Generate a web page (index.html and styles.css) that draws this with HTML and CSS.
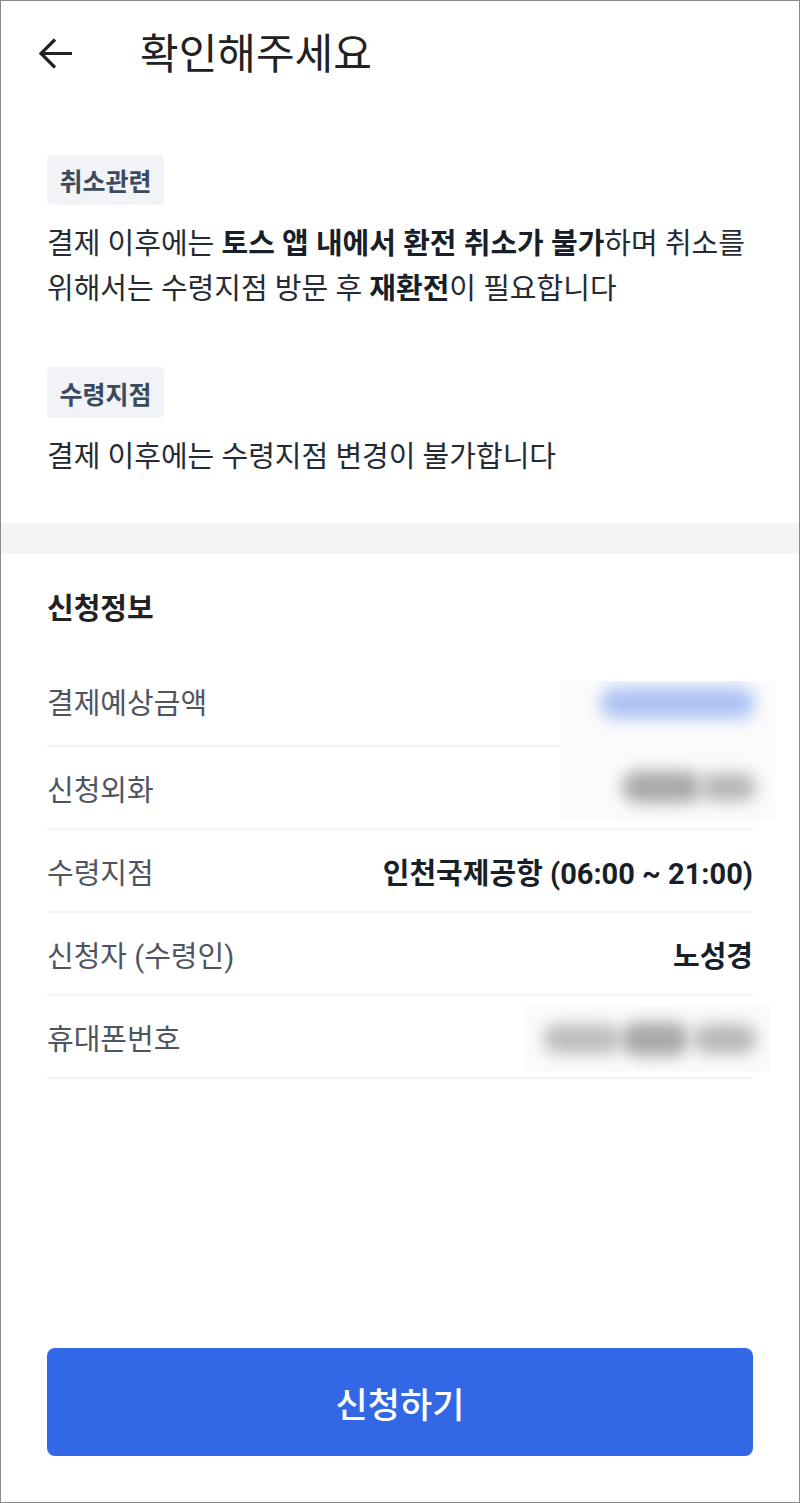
FILE: index.html
```html
<!DOCTYPE html>
<html lang="ko">
<head>
<meta charset="utf-8">
<title>확인해주세요</title>
<link rel="stylesheet" href="styles.css">
</head>
<body>
<div class="frame">
  <header class="topbar">
    <svg class="back" width="34" height="34" viewBox="0 0 34 34" aria-hidden="true">
      <path d="M2 15.5H33M16 1.5L2 15.5L16 29.5" fill="none" stroke="#222" stroke-width="3.2"/>
    </svg>
    <h1 class="title">확인해주세요</h1>
  </header>

  <section class="notice">
    <span class="tag">취소관련</span>
    <p class="notice-text">결제 이후에는 <b>토스 앱 내에서 환전 취소가 불가</b>하며 취소를<br>위해서는 수령지점 방문 후 <b>재환전</b>이 필요합니다</p>
    <span class="tag tag-second">수령지점</span>
    <p class="notice-text">결제 이후에는 수령지점 변경이 불가합니다</p>
  </section>

  <div class="band"></div>

  <section class="info">
    <h2 class="info-title">신청정보</h2>
    <div class="rows">
      <div class="row row-first">
        <span class="label">결제예상금액</span>
        <span class="value"></span>
        <div class="redact redact-a">
          <span class="blob blob-blue"></span>
          <span class="blob blob-gray1"></span>
          <span class="blob blob-gray2"></span>
        </div>
      </div>
      <div class="row">
        <span class="label">신청외화</span>
        <span class="value"></span>
      </div>
      <div class="row">
        <span class="label">수령지점</span>
        <span class="value">인천국제공항 (06:00 ~ 21:00)</span>
      </div>
      <div class="row">
        <span class="label">신청자 (수령인)</span>
        <span class="value">노성경</span>
      </div>
      <div class="row">
        <span class="label">휴대폰번호</span>
        <span class="value"></span>
        <div class="redact redact-b">
          <span class="blob blob-p1"></span>
          <span class="blob blob-p2"></span>
          <span class="blob blob-p3"></span>
        </div>
      </div>
    </div>
  </section>

  <div class="footer">
    <button class="cta" type="button">신청하기</button>
  </div>
</div>
</body>
</html>
```

FILE: styles.css
```css
* { box-sizing: border-box; }

html, body {
  margin: 0;
  padding: 0;
  background: #ffffff;
}

body {
  font-family: Roboto, "Noto Sans CJK KR", "Noto Sans", sans-serif;
  color: #191f28;
}

.frame {
  width: 800px;
  height: 1503px;
  border: 1px solid #8a8a8a;
  display: flex;
  flex-direction: column;
  background: #fff;
  overflow: hidden;
}

.topbar {
  height: 108px;
  display: flex;
  align-items: center;
  padding-left: 38px;
}

.back {
  display: block;
  flex: none;
}

.title {
  margin: 0 0 0 67px;
  font-size: 42px;
  font-weight: 400;
  color: #222222;
  line-height: 1;
}

.notice {
  padding: 46px 46px 0;
  display: flex;
  flex-direction: column;
  align-items: flex-start;
}

.tag {
  display: inline-flex;
  align-items: center;
  height: 50px;
  padding: 0 12.5px;
  border-radius: 5px;
  background: #f1f3f6;
  color: #3c4a5e;
  font-size: 25px;
  font-weight: 700;
}

.tag-second {
  margin-top: 55px;
  height: 51px;
}

.notice-text {
  margin: 17px 0 0;
  font-size: 29px;
  line-height: 45px;
  color: #262b33;
  white-space: nowrap;
}

.notice-text b {
  font-weight: 700;
  color: #191f28;
}

.band {
  margin-top: 43px;
  height: 31px;
  background: #f2f3f5;
  flex: none;
}

.info {
  padding: 37px 46px 0;
}

.info-title {
  margin: 0;
  font-size: 29px;
  line-height: 36px;
  font-weight: 700;
  color: #222;
}

.rows {
  margin-top: 30px;
}

.row {
  position: relative;
  height: 83px;
  display: flex;
  align-items: center;
  justify-content: space-between;
  border-bottom: 2px solid #f2f3f5;
}

.row-first {
  height: 90px;
}

.label {
  font-size: 29px;
  color: #4e5560;
}

.value {
  font-size: 29px;
  font-weight: 700;
  color: #191f28;
}

.redact {
  position: absolute;
  background: #fbfbfb;
  overflow: hidden;
}

.redact-a {
  left: 513px;
  top: 24px;
  width: 215px;
  height: 140px;
}

.redact-b {
  left: 478px;
  top: 10px;
  width: 245px;
  height: 66px;
}

.blob {
  position: absolute;
  border-radius: 16px;
  filter: blur(8px);
}

.blob-blue {
  left: 40px;
  top: 6px;
  width: 155px;
  height: 32px;
  background: #adc3f4;
}

.blob-gray1 {
  left: 62px;
  top: 90px;
  width: 80px;
  height: 32px;
  background: #a9a9a9;
}

.blob-gray2 {
  left: 140px;
  top: 92px;
  width: 56px;
  height: 28px;
  background: #b6b6b6;
}

.blob-p1 {
  left: 18px;
  top: 18px;
  width: 78px;
  height: 30px;
  background: #bdbdbd;
}

.blob-p2 {
  left: 96px;
  top: 16px;
  width: 68px;
  height: 34px;
  background: #a8a8a8;
}

.blob-p3 {
  left: 168px;
  top: 18px;
  width: 64px;
  height: 30px;
  background: #b9b9b9;
}

.footer {
  margin-top: auto;
  padding: 0 46px 46px;
}

.cta {
  display: flex;
  align-items: center;
  justify-content: center;
  width: 100%;
  height: 108px;
  border: none;
  border-radius: 8px;
  background: #3268e6;
  color: #ffffff;
  font-family: Roboto, "Noto Sans CJK KR", sans-serif;
  font-size: 35px;
  font-weight: 500;
  padding: 0;
}
```
